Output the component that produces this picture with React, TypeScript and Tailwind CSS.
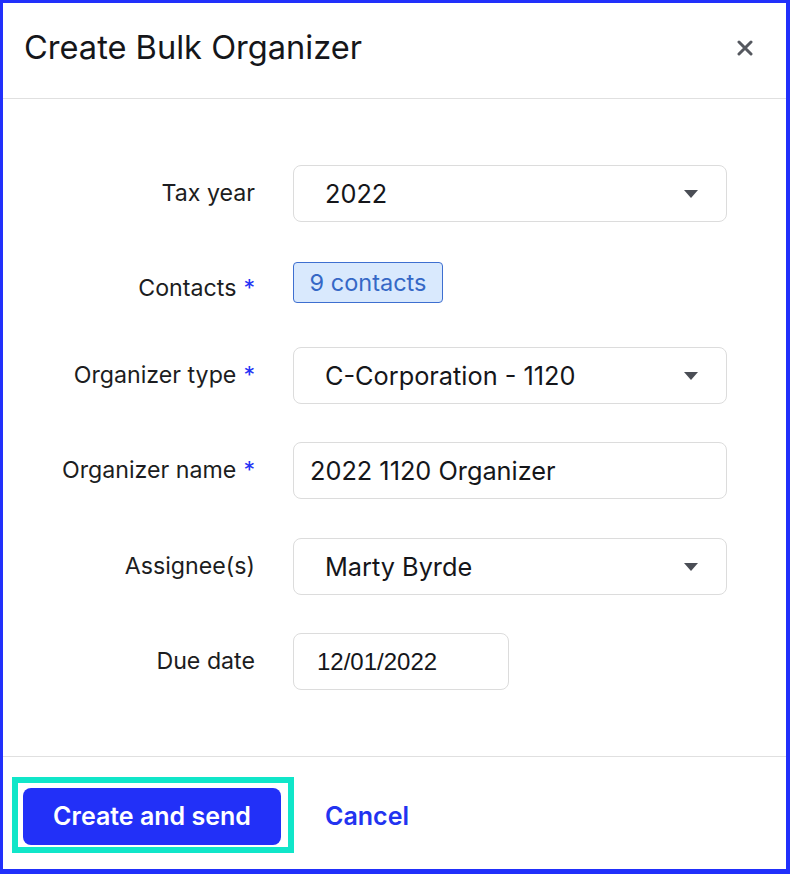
const font = { fontFamily: "Inter, 'Liberation Sans', sans-serif" };

function Caret() {
  return (
    <svg width="14" height="8" viewBox="0 0 14 8" className="shrink-0">
      <path d="M0 0h14L7 8z" fill="#4a4d55" />
    </svg>
  );
}

function Label({ text, required }: { text: string; required?: boolean }) {
  return (
    <div className="w-[252px] shrink-0 text-right text-[23.2px] text-[#1c1d21]">
      {text}
      {required && <span className="ml-[7px] text-[#2433f5]">*</span>}
    </div>
  );
}

function Select({ value }: { value: string }) {
  return (
    <div className="flex h-[57px] w-[434px] items-center justify-between rounded-lg border border-[#dcdcdc] pl-[31px] pr-[28px] text-[25.3px] text-[#15161a]">
      <span>{value}</span>
      <Caret />
    </div>
  );
}

export default function App() {
  return (
    <div
      style={font}
      className="flex h-[874px] w-[790px] flex-col border-t-[3px] border-l-[3px] border-r-4 border-b-[5px] border-[#2130fb] bg-white"
    >
      <header className="flex h-[96px] shrink-0 items-center justify-between border-b border-[#e0e0e0] pb-[6px] pl-[21px] pr-[33px]">
        <h1 className="text-[32.6px] text-[#15161a]">Create Bulk Organizer</h1>
        <svg width="16" height="16" viewBox="0 0 16 16">
          <path d="M2 2l12 12M14 2L2 14" stroke="#55585f" strokeWidth="3" strokeLinecap="round" />
        </svg>
      </header>

      <main className="flex flex-1 flex-col pt-[66px]">
        <div className="flex h-[57px] items-center gap-[38px]">
          <Label text="Tax year" />
          <Select value="2022" />
        </div>

        <div className="mt-[38px] flex h-[57px] items-center gap-[38px]">
          <Label text="Contacts" required />
          <div className="mb-[12px] flex h-[41px] w-[150px] items-center justify-center rounded border border-[#3e6fd0] bg-[#d9e9fd] text-[23.5px] text-[#3568c6]">
            9 contacts
          </div>
        </div>

        <div className="mt-[30px] flex h-[57px] items-center gap-[38px]">
          <Label text="Organizer type" required />
          <Select value="C-Corporation - 1120" />
        </div>

        <div className="mt-[38px] flex h-[57px] items-center gap-[38px]">
          <Label text="Organizer name" required />
          <div className="flex h-[57px] w-[434px] items-center rounded-lg border border-[#dcdcdc] pl-[16px] text-[25.3px] text-[#15161a]">
            2022 1120 Organizer
          </div>
        </div>

        <div className="mt-[39px] flex h-[57px] items-center gap-[38px]">
          <Label text="Assignee(s)" />
          <Select value="Marty Byrde" />
        </div>

        <div className="mt-[38px] flex h-[57px] items-center gap-[38px]">
          <Label text="Due date" />
          <div className="flex h-[57px] w-[216px] items-center rounded-lg border border-[#dcdcdc] pl-[23px] font-['Liberation_Sans',sans-serif] text-[24px] text-[#15161a]">
            12/01/2022
          </div>
        </div>
      </main>

      <footer className="flex h-[113px] shrink-0 items-center gap-[31px] border-t border-[#e0e0e0] pt-[4px] pl-[9px]">
        <div className="border-[6px] border-[#10e6c9] pt-[5px] pb-[2px] pl-[5px] pr-[7px]">
          <button className="h-[57px] w-[258px] rounded-lg bg-[#2230f8] text-[25px] font-semibold text-white">
            Create and send
          </button>
        </div>
        <button className="pt-[3px] text-[25px] font-semibold text-[#2233f0]">Cancel</button>
      </footer>
    </div>
  );
}
